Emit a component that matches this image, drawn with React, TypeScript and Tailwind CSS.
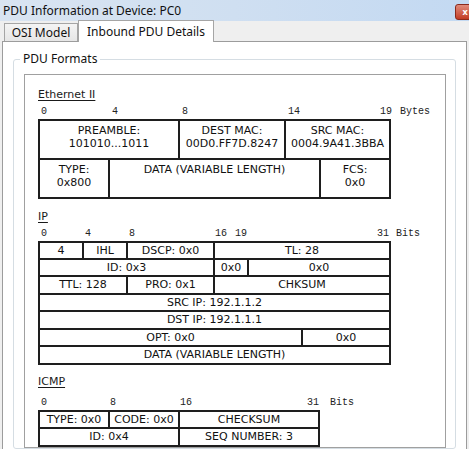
import React from "react";

type Cell = { w: string; lines: string[] };
type Row = { h: string; cells: Cell[] };

const ethRows: Row[] = [
  {
    h: "h-[39px]",
    cells: [
      { w: "w-[140px]", lines: ["PREAMBLE:", "101010...1011"] },
      { w: "w-[106px]", lines: ["DEST MAC:", "00D0.FF7D.8247"] },
      { w: "w-[105px]", lines: ["SRC MAC:", "0004.9A41.3BBA"] },
    ],
  },
  {
    h: "h-[39px]",
    cells: [
      { w: "w-[70px]", lines: ["TYPE:", "0x800"] },
      { w: "w-[211px]", lines: ["DATA (VARIABLE LENGTH)"] },
      { w: "w-[70px]", lines: ["FCS:", "0x0"] },
    ],
  },
];

const ipRows: Row[] = [
  {
    h: "h-[17px]",
    cells: [
      { w: "w-[44px]", lines: ["4"] },
      { w: "w-[44px]", lines: ["IHL"] },
      { w: "w-[87px]", lines: ["DSCP: 0x0"] },
      { w: "w-[176px]", lines: ["TL: 28"] },
    ],
  },
  {
    h: "h-[17px]",
    cells: [
      { w: "w-[175px]", lines: ["ID: 0x3"] },
      { w: "w-[34px]", lines: ["0x0"] },
      { w: "w-[142px]", lines: ["0x0"] },
    ],
  },
  {
    h: "h-[18px]",
    cells: [
      { w: "w-[88px]", lines: ["TTL: 128"] },
      { w: "w-[87px]", lines: ["PRO: 0x1"] },
      { w: "w-[176px]", lines: ["CHKSUM"] },
    ],
  },
  { h: "h-[17px]", cells: [{ w: "w-[351px]", lines: ["SRC IP: 192.1.1.2"] }] },
  { h: "h-[18px]", cells: [{ w: "w-[351px]", lines: ["DST IP: 192.1.1.1"] }] },
  {
    h: "h-[17px]",
    cells: [
      { w: "w-[263px]", lines: ["OPT: 0x0"] },
      { w: "w-[88px]", lines: ["0x0"] },
    ],
  },
  { h: "h-[18px]", cells: [{ w: "w-[351px]", lines: ["DATA (VARIABLE LENGTH)"] }] },
];

const icmpRows: Row[] = [
  {
    h: "h-[17px]",
    cells: [
      { w: "w-[70px]", lines: ["TYPE: 0x0"] },
      { w: "w-[70px]", lines: ["CODE: 0x0"] },
      { w: "w-[140px]", lines: ["CHECKSUM"] },
    ],
  },
  {
    h: "h-[18px]",
    cells: [
      { w: "w-[140px]", lines: ["ID: 0x4"] },
      { w: "w-[140px]", lines: ["SEQ NUMBER: 3"] },
    ],
  },
];

type Mark = { left: string; text: string };

const ethMarks: Mark[] = [
  { left: "left-[3px]", text: "0" },
  { left: "left-[74px]", text: "4" },
  { left: "left-[144px]", text: "8" },
  { left: "left-[250px]", text: "14" },
  { left: "left-[342px]", text: "19" },
  { left: "left-[362px]", text: "Bytes" },
];

const ipMarks: Mark[] = [
  { left: "left-[3px]", text: "0" },
  { left: "left-[47px]", text: "4" },
  { left: "left-[91px]", text: "8" },
  { left: "left-[177px]", text: "16" },
  { left: "left-[197px]", text: "19" },
  { left: "left-[339px]", text: "31" },
  { left: "left-[358px]", text: "Bits" },
];

const icmpMarks: Mark[] = [
  { left: "left-[3px]", text: "0" },
  { left: "left-[72px]", text: "8" },
  { left: "left-[142px]", text: "16" },
  { left: "left-[269px]", text: "31" },
  { left: "left-[292px]", text: "Bits" },
];

// bit / byte offsets above each header table
function Ruler({ marks, h }: { marks: Mark[]; h: string }) {
  return (
    <div className={`relative ${h} font-['Liberation_Mono',monospace] text-[10px] leading-[12px] text-[#222]`}>
      {marks.map((m) => (
        <span key={m.text + m.left} className={`absolute bottom-px ${m.left}`}>
          {m.text}
        </span>
      ))}
    </div>
  );
}

function Table({ rows, stacked }: { rows: Row[]; stacked?: boolean }) {
  return (
    <div className="self-start border-l-2 border-t-2 border-[#1e1e1e]">
      {rows.map((row, i) => (
        <div key={i} className={`flex ${row.h}`}>
          {row.cells.map((c, j) => (
            <div
              key={j}
              className={`${c.w} flex flex-col items-center border-r-2 border-b-2 border-[#1e1e1e] ${
                stacked ? "justify-start pt-[3px] leading-[13px]" : "justify-center leading-[12px]"
              }`}
            >
              {c.lines.map((l) => (
                <span key={l} className="whitespace-nowrap">
                  {l}
                </span>
              ))}
            </div>
          ))}
        </div>
      ))}
    </div>
  );
}

function Heading({ children }: { children: React.ReactNode }) {
  return (
    <div className="h-[14px] flex items-center text-[11px] underline underline-offset-2 text-[#1a1a1a]">
      {children}
    </div>
  );
}

export default function App() {
  return (
    <div className="w-[469px] h-[449px] overflow-hidden bg-[#efefef] flex flex-col font-['Noto_Sans',sans-serif]">
      {/* title bar */}
      <div className="h-[21px] shrink-0 flex items-center pl-[3px] bg-gradient-to-r from-[#d9e4f1] via-[#cfdff1] to-[#c3d9f2] text-[12px] text-[#111]">
        <span>PDU Information at Device: PC0</span>
        <div className="ml-auto mr-[-6px] mt-[2px] w-[20px] h-[16px] rounded-[3px] bg-gradient-to-b from-[#e08a7a] to-[#c23a22] border border-[#8a2a1c] flex items-center justify-center text-white text-[9px] font-bold leading-none">
          x
        </div>
      </div>

      {/* tabs */}
      <div className="h-[20px] shrink-0 flex items-end pl-[4px] text-[12px] text-[#111]">
        <div className="h-[18px] w-[74px] flex items-center justify-center border border-b-0 border-[#a5a5a5] bg-gradient-to-b from-[#f4f4f4] to-[#e6e6e6]">
          OSI Model
        </div>
        <div className="relative z-10 h-[22px] w-[136px] -mb-px flex items-center justify-center border border-b-0 border-[#a5a5a5] bg-white">
          Inbound PDU Details
        </div>
      </div>

      {/* panel */}
      <div className="flex-1 mx-[2px] border border-[#9c9c9c] bg-white flex flex-col">
        <div className="relative flex-1 mt-[17px] mx-[10px] border border-[#d5dde3] rounded-[3px] flex flex-col">
          <span className="absolute -top-[9px] left-[6px] px-[3px] bg-white text-[12px] leading-[16px] text-[#111]">
            PDU Formats
          </span>
          <div className="flex-1 mt-[14px] ml-[10px] mr-[9px] border border-[#a0a0a0] flex flex-col pt-[13px] pl-[13px] font-['DejaVu_Sans',sans-serif] text-[11px] text-[#111]">
            <Heading>Ethernet II</Heading>
            <Ruler marks={ethMarks} h="h-[17px]" />
            <Table rows={ethRows} stacked />

            <div className="h-[11px]" />
            <Heading>IP</Heading>
            <Ruler marks={ipMarks} h="h-[17px]" />
            <Table rows={ipRows} />

            <div className="h-[10px]" />
            <Heading>ICMP</Heading>
            <Ruler marks={icmpMarks} h="h-[21px]" />
            <Table rows={icmpRows} />
          </div>
        </div>
      </div>
    </div>
  );
}
